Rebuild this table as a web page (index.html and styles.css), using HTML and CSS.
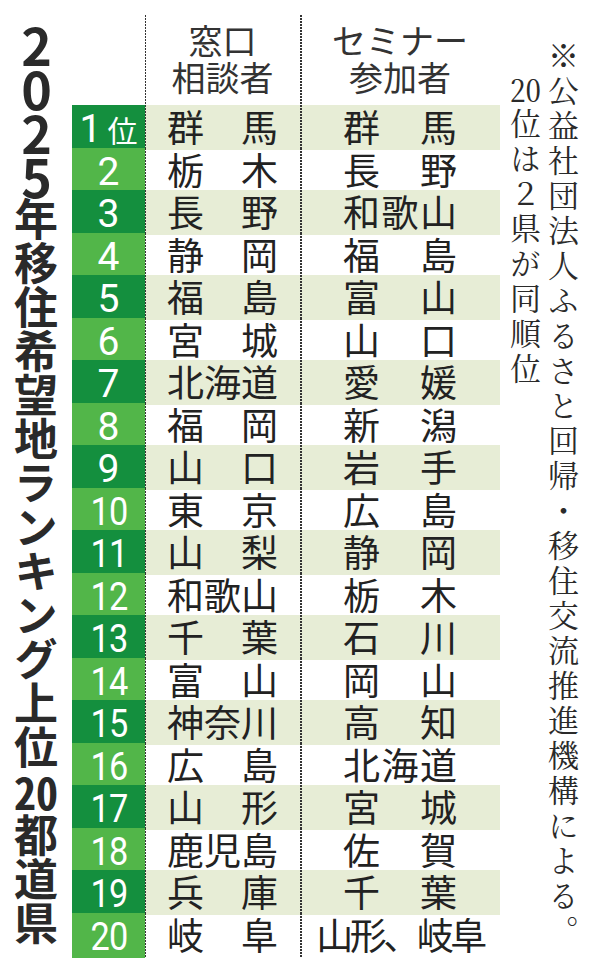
FILE: index.html
```html
<!DOCTYPE html>
<html lang="ja">
<head>
<meta charset="utf-8">
<title>2025年移住希望地ランキング上位20都道県</title>
<link rel="stylesheet" href="styles.css">
</head>
<body>
<main class="page">
  <h1 class="title"><span class="tcy big">2</span><span class="tcy big">0</span><span class="tcy big">2</span><span class="tcy big">5</span>年移住希望地ランキング上位<span class="tcy">20</span>都道県</h1>
  <div class="table">
    <div class="row head">
      <div class="rank"></div>
      <div class="c c1"><span>窓口</span><span>相談者</span></div>
      <div class="c c2"><span>セミナー</span><span>参加者</span></div>
    </div>
    <div class="row odd"><div class="rank"><span class="n">1</span><span class="i">位</span></div><div class="c c1"><span class="nm">群馬</span></div><div class="c c2"><span class="nm">群馬</span></div></div>
    <div class="row"><div class="rank"><span class="n">2</span></div><div class="c c1"><span class="nm">栃木</span></div><div class="c c2"><span class="nm">長野</span></div></div>
    <div class="row odd"><div class="rank"><span class="n">3</span></div><div class="c c1"><span class="nm">長野</span></div><div class="c c2"><span class="nm">和歌山</span></div></div>
    <div class="row"><div class="rank"><span class="n">4</span></div><div class="c c1"><span class="nm">静岡</span></div><div class="c c2"><span class="nm">福島</span></div></div>
    <div class="row odd"><div class="rank"><span class="n">5</span></div><div class="c c1"><span class="nm">福島</span></div><div class="c c2"><span class="nm">富山</span></div></div>
    <div class="row"><div class="rank"><span class="n">6</span></div><div class="c c1"><span class="nm">宮城</span></div><div class="c c2"><span class="nm">山口</span></div></div>
    <div class="row odd"><div class="rank"><span class="n">7</span></div><div class="c c1"><span class="nm">北海道</span></div><div class="c c2"><span class="nm">愛媛</span></div></div>
    <div class="row"><div class="rank"><span class="n">8</span></div><div class="c c1"><span class="nm">福岡</span></div><div class="c c2"><span class="nm">新潟</span></div></div>
    <div class="row odd"><div class="rank"><span class="n">9</span></div><div class="c c1"><span class="nm">山口</span></div><div class="c c2"><span class="nm">岩手</span></div></div>
    <div class="row"><div class="rank"><span class="n two">10</span></div><div class="c c1"><span class="nm">東京</span></div><div class="c c2"><span class="nm">広島</span></div></div>
    <div class="row odd"><div class="rank"><span class="n two">11</span></div><div class="c c1"><span class="nm">山梨</span></div><div class="c c2"><span class="nm">静岡</span></div></div>
    <div class="row"><div class="rank"><span class="n two">12</span></div><div class="c c1"><span class="nm">和歌山</span></div><div class="c c2"><span class="nm">栃木</span></div></div>
    <div class="row odd"><div class="rank"><span class="n two">13</span></div><div class="c c1"><span class="nm">千葉</span></div><div class="c c2"><span class="nm">石川</span></div></div>
    <div class="row"><div class="rank"><span class="n two">14</span></div><div class="c c1"><span class="nm">富山</span></div><div class="c c2"><span class="nm">岡山</span></div></div>
    <div class="row odd"><div class="rank"><span class="n two">15</span></div><div class="c c1"><span class="nm">神奈川</span></div><div class="c c2"><span class="nm">高知</span></div></div>
    <div class="row"><div class="rank"><span class="n two">16</span></div><div class="c c1"><span class="nm">広島</span></div><div class="c c2"><span class="nm">北海道</span></div></div>
    <div class="row odd"><div class="rank"><span class="n two">17</span></div><div class="c c1"><span class="nm">山形</span></div><div class="c c2"><span class="nm">宮城</span></div></div>
    <div class="row"><div class="rank"><span class="n two">18</span></div><div class="c c1"><span class="nm">鹿児島</span></div><div class="c c2"><span class="nm">佐賀</span></div></div>
    <div class="row odd"><div class="rank"><span class="n two">19</span></div><div class="c c1"><span class="nm">兵庫</span></div><div class="c c2"><span class="nm">千葉</span></div></div>
    <div class="row"><div class="rank"><span class="n two">20</span></div><div class="c c1"><span class="nm">岐阜</span></div><div class="c c2"><span class="wide">山形、岐阜</span></div></div>
  </div>
  <aside class="note">
    <p class="l1">※公益社団法人ふるさと回帰・移住交流推進機構による。</p>
    <p class="l2"><span class="tcy">20</span>位は２県が同順位</p>
  </aside>
</main>
</body>
</html>
```
FILE: styles.css
```css
* { box-sizing: border-box; margin: 0; padding: 0; }
body {
  background: #fff;
  color: #222;
  font-family: "Noto Sans CJK JP", "Noto Sans", sans-serif;
}
.page {
  display: flex;
  align-items: flex-start;
  width: 600px;
  height: 973px;
}
.title {
  writing-mode: vertical-rl;
  font-size: 44px;
  line-height: 44px;
  font-weight: 700;
  width: 44px;
  height: 930px;
  margin: 21px 0 0 14px;
  color: #2a2a2a;
}
.tcy { text-combine-upright: all; }
.title .big {
  font-size: 52px;
  margin-top: -4px;
  margin-bottom: -4px;
}

.table {
  width: 428px;
  margin: 15px 0 0 14px;
}
.row {
  display: grid;
  grid-template-columns: 73px 155px 200px;
  height: 42.5px;
}
.row.head { height: 90px; }
.c {
  display: flex;
  align-items: center;
  justify-content: center;
  font-size: 37px;
  line-height: 42px;
  padding-bottom: 3px;
  background-image: repeating-linear-gradient(to bottom, #333 0 2px, transparent 2px 3px);
  background-size: 2px 100%;
  background-repeat: no-repeat;
  background-position: left top;
}
.c1 { background-position: -1px top; }
.row.odd .c { background-color: #e7edd6; }
.nm {
  display: block;
  width: 111px;
  text-align: justify;
  text-align-last: justify;
}
.c2 .nm { width: 114px; }
.wide { letter-spacing: -3.5px; }

.row.head .c {
  flex-direction: column;
  justify-content: flex-start;
  padding: 6px 0 0;
  font-size: 34px;
  line-height: 37px;
  color: #333;
}

.rank {
  display: flex;
  align-items: center;
  justify-content: center;
  color: #fff;
  background: #52b649;
  font-family: Roboto, "Liberation Sans", sans-serif;
  font-size: 39px;
  line-height: 42px;
  padding-top: 3px;
}
.row.odd .rank { background: #148f3e; }
.row.head .rank { background: transparent; }
.n.two { display: inline-block; transform: scaleX(0.88); letter-spacing: -1px; }
.i {
  font-family: "Noto Sans CJK JP", sans-serif;
  font-size: 30px;
  margin-left: 6px;
}

.note {
  writing-mode: vertical-rl;
  font-family: "Noto Serif CJK JP", "Noto Sans CJK JP", serif;
  font-size: 31px;
  line-height: 38px;
  letter-spacing: 4px;
  height: 935px;
  margin: 40px 0 0 6px;
  color: #2a2a2a;
}
.note .tcy { letter-spacing: 0; margin-bottom: 4px; }
.note .l2 { padding-top: 33px; }
```
